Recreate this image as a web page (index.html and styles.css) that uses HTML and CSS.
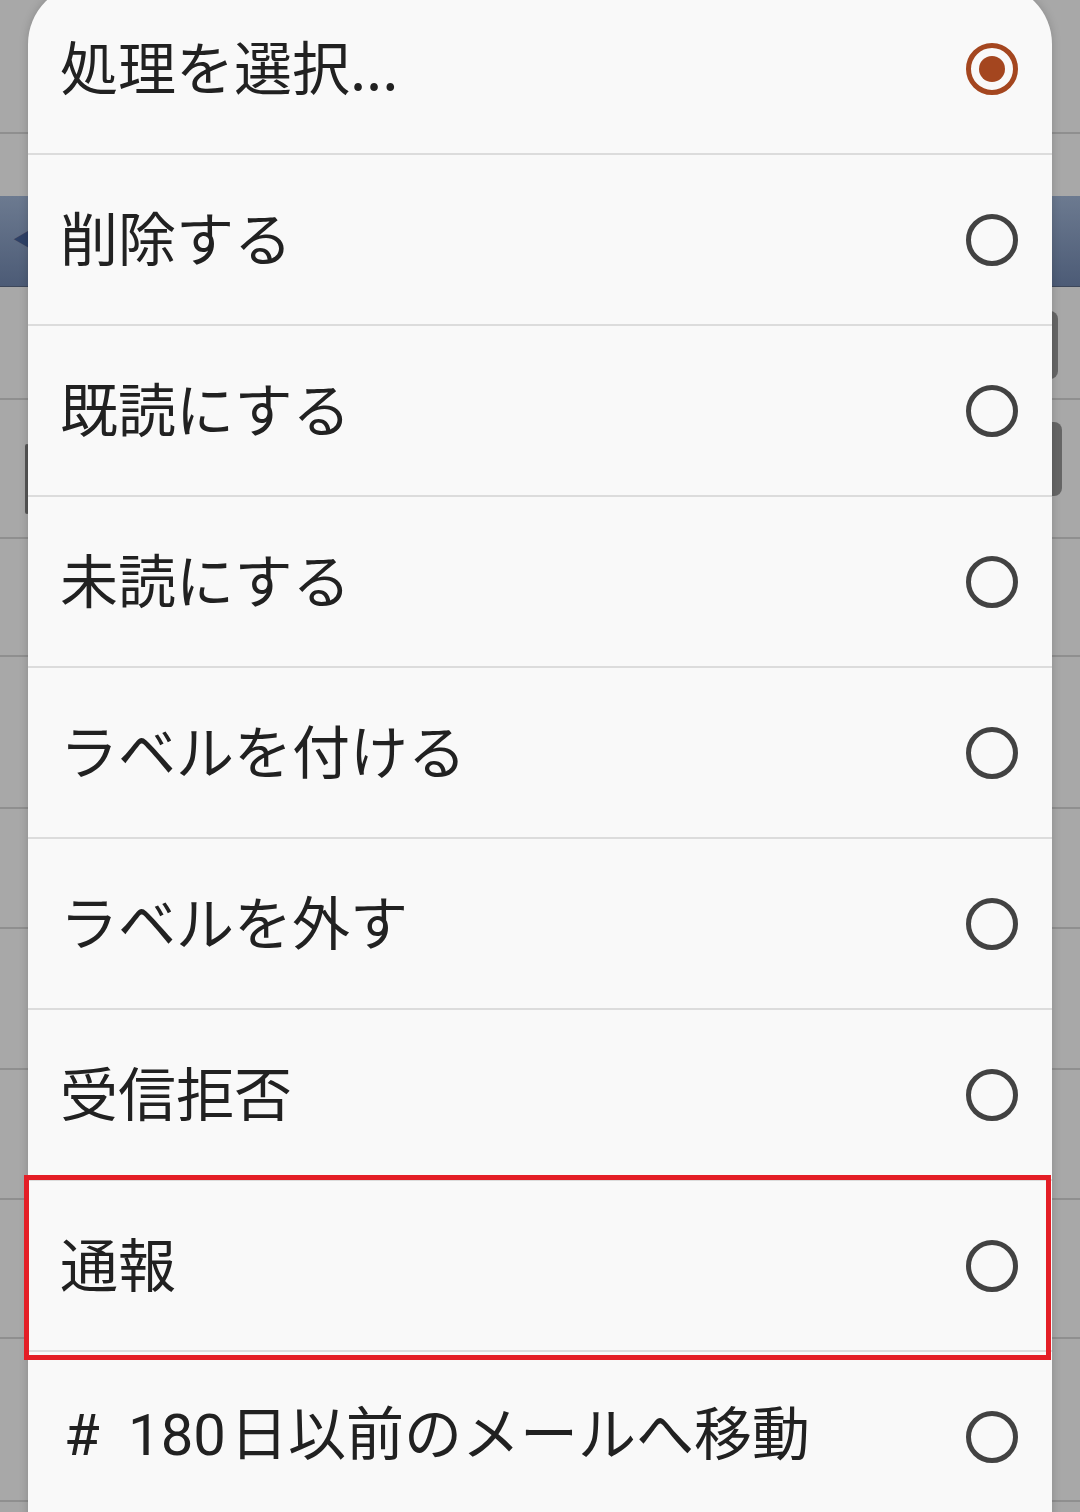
FILE: index.html
```html
<!DOCTYPE html>
<html lang="ja">
<head>
<meta charset="utf-8">
<link rel="stylesheet" href="styles.css">
</head>
<body>
<div class="app">
  <div class="bg-row r1"></div>
  <div class="bg-row r2"></div>
  <div class="bg-bar"><span class="back">&#9664;</span></div>
  <div class="bg-row r3"><span class="btn-edge"></span></div>
  <div class="bg-row r4"><span class="btn-edge b2"></span><span class="left-edge"></span></div>
  <div class="bg-row r5"></div>
  <div class="bg-row r6"></div>
  <div class="bg-row r7"></div>
  <div class="bg-row r8"></div>
  <div class="bg-row r9"></div>
  <div class="bg-row r10"></div>
  <div class="bg-row r11"></div>
</div>

<div class="dialog">
  <div class="item"><span class="label">処理を選択...</span>
    <svg class="radio" width="52" height="52" viewBox="0 0 52 52"><circle cx="26" cy="26" r="23.5" fill="none" stroke="#a4461f" stroke-width="5"/><circle cx="26" cy="26" r="13" fill="#a4461f"/></svg>
  </div>
  <div class="item"><span class="label">削除する</span>
    <svg class="radio" width="52" height="52" viewBox="0 0 52 52"><circle cx="26" cy="26" r="23.5" fill="none" stroke="#424242" stroke-width="5"/></svg>
  </div>
  <div class="item"><span class="label">既読にする</span>
    <svg class="radio" width="52" height="52" viewBox="0 0 52 52"><circle cx="26" cy="26" r="23.5" fill="none" stroke="#424242" stroke-width="5"/></svg>
  </div>
  <div class="item"><span class="label">未読にする</span>
    <svg class="radio" width="52" height="52" viewBox="0 0 52 52"><circle cx="26" cy="26" r="23.5" fill="none" stroke="#424242" stroke-width="5"/></svg>
  </div>
  <div class="item"><span class="label">ラベルを付ける</span>
    <svg class="radio" width="52" height="52" viewBox="0 0 52 52"><circle cx="26" cy="26" r="23.5" fill="none" stroke="#424242" stroke-width="5"/></svg>
  </div>
  <div class="item"><span class="label">ラベルを外す</span>
    <svg class="radio" width="52" height="52" viewBox="0 0 52 52"><circle cx="26" cy="26" r="23.5" fill="none" stroke="#424242" stroke-width="5"/></svg>
  </div>
  <div class="item"><span class="label">受信拒否</span>
    <svg class="radio" width="52" height="52" viewBox="0 0 52 52"><circle cx="26" cy="26" r="23.5" fill="none" stroke="#424242" stroke-width="5"/></svg>
  </div>
  <div class="item"><span class="label">通報</span>
    <svg class="radio" width="52" height="52" viewBox="0 0 52 52"><circle cx="26" cy="26" r="23.5" fill="none" stroke="#424242" stroke-width="5"/></svg>
  </div>
  <div class="item"><span class="label"><span class="num"># 180</span>日以前のメールへ移動</span>
    <svg class="radio" width="52" height="52" viewBox="0 0 52 52"><circle cx="26" cy="26" r="23.5" fill="none" stroke="#424242" stroke-width="5"/></svg>
  </div>
</div>

<div class="highlight"></div>
</body>
</html>
```

FILE: styles.css
```css
html, body {
  margin: 0;
  padding: 0;
}
body {
  width: 1080px;
  height: 1512px;
  overflow: hidden;
  position: relative;
  background: #a7a7a7;
  font-family: "Noto Sans CJK JP", sans-serif;
}

.app {
  display: flex;
  flex-direction: column;
  width: 1080px;
}
.bg-row {
  position: relative;
  border-bottom: 2px solid #8f8f8f;
  box-sizing: border-box;
  background: #a8a8a8;
}
.r1 { height: 134px; }
.r2 { height: 62px; border-bottom: none; }
.bg-bar {
  height: 90px;
  background: linear-gradient(#6c7a90, #4c5b76);
  border-bottom: 1px solid #3d475a;
  position: relative;
}
.back {
  position: absolute;
  left: 12px;
  top: 28px;
  font-size: 28px;
  color: #2e4166;
  line-height: 1;
}
.r3 { height: 113px; }
.r4 { height: 139px; }
.r5 { height: 118px; }
.r6 { height: 152px; }
.r7 { height: 120px; }
.r8 { height: 141px; }
.r9 { height: 130px; }
.r10 { height: 139px; }
.r11 { height: 163px; }

.btn-edge {
  position: absolute;
  left: 1040px;
  top: 24px;
  width: 18px;
  height: 68px;
  border-radius: 8px;
  background: #666;
}
.btn-edge.b2 {
  top: 22px;
  height: 74px;
  width: 22px;
}
.left-edge {
  position: absolute;
  left: 25px;
  top: 44px;
  width: 4px;
  height: 70px;
  border-radius: 2px;
  background: #555;
}

.dialog {
  position: absolute;
  left: 28px;
  top: -16px;
  width: 1024px;
  background: #f9f9f9;
  border-radius: 60px 60px 0 0;
  box-shadow: 0 0 10px rgba(0, 0, 0, 0.18);
  display: flex;
  flex-direction: column;
}
.item {
  height: 169px;
  border-bottom: 2px solid #dcdcdc;
  display: flex;
  align-items: center;
  justify-content: space-between;
  padding: 0 34px 0 32px;
}
.label {
  font-size: 58px;
  line-height: 1;
  padding-bottom: 8px;
  color: #212121;
  font-family: "Noto Sans CJK JP", sans-serif;
}
.num {
  font-family: Roboto, sans-serif;
  word-spacing: 14px;
  margin-left: 4px;
  margin-right: 4px;
}
.radio {
  display: block;
  flex: none;
}

.highlight {
  position: absolute;
  left: 24px;
  top: 1175px;
  width: 1027px;
  height: 185px;
  box-sizing: border-box;
  border: 5px solid #e41e26;
}
```
